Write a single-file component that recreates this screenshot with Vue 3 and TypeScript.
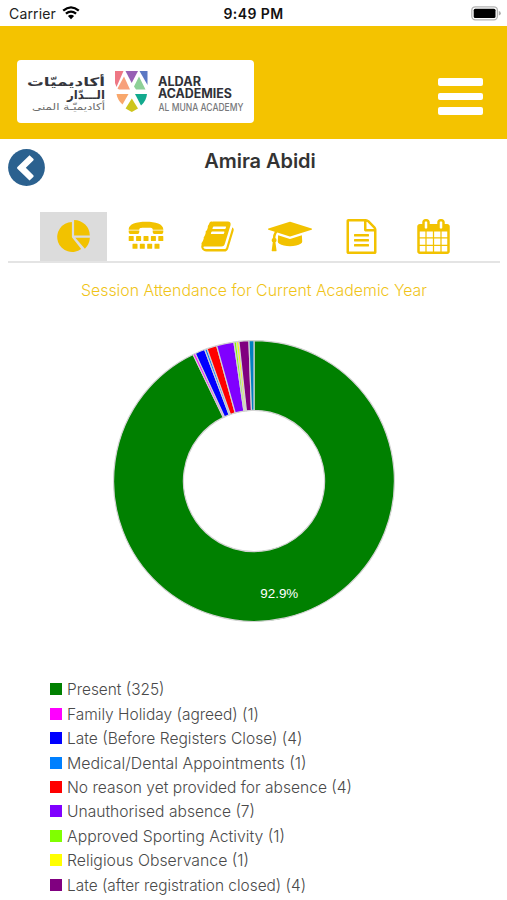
<script setup lang="ts">
interface Entry {
  label: string
  count: number
  color: string
  width: number
}

const entries: Entry[] = [
  { label: 'Present', count: 325, color: '#008000', width: 97.5 },
  { label: 'Family Holiday (agreed)', count: 1, color: '#ff00ff', width: 192 },
  { label: 'Late (Before Registers Close)', count: 4, color: '#0000ff', width: 235.5 },
  { label: 'Medical/Dental Appointments', count: 1, color: '#0080ff', width: 239.5 },
  { label: 'No reason yet provided for absence', count: 4, color: '#ff0000', width: 285 },
  { label: 'Unauthorised absence', count: 7, color: '#8000ff', width: 188 },
  { label: 'Approved Sporting Activity', count: 1, color: '#80ff00', width: 218 },
  { label: 'Religious Observance', count: 1, color: '#ffff00', width: 182 },
  { label: 'Late (after registration closed)', count: 4, color: '#800080', width: 239 },
]

const slices = [...entries.map(({ count, color }) => ({ count, color })), { count: 2, color: '#0080c0' }]
const total = slices.reduce((sum, s) => sum + s.count, 0)
const share = ((entries[0].count / total) * 100).toFixed(1) + '%'

const OUTER = 140.4
const INNER = 70.6

function point(radius: number, turn: number): string {
  const a = turn * Math.PI * 2
  return `${(Math.sin(a) * radius).toFixed(2)} ${(-Math.cos(a) * radius).toFixed(2)}`
}

let start = 0
const arcs = slices.map(({ count, color }) => {
  const from = start / total
  start += count
  const to = start / total
  const large = to - from > 0.5 ? 1 : 0
  return {
    color,
    d: `M${point(OUTER, from)}A${OUTER} ${OUTER} 0 ${large} 1 ${point(OUTER, to)}L${point(INNER, to)}A${INNER} ${INNER} 0 ${large} 0 ${point(INNER, from)}Z`,
  }
})

interface Tab {
  name: string
  box: string
  width: number
  height: number
  d: string
}

const tabs: Tab[] = [
  {
    name: 'Attendance', box: '0 0 35 35', width: 35, height: 35,
    d: 'M15.900 3V18.200L25.200 30A15 15 0 1 1 15.900 3zM18.100 .9A16.200 15.600 0 0 1 33.800 16.400H18.100zM19.300 18.800H33.900Q33.500 25.200 28.900 29.800z',
  },
  {
    name: 'Contact', box: '0 0 36 35', width: 36, height: 35,
    d: 'M.7 10.300C.7 5 8.500 2.700 18 2.700s17.300 2.300 17.300 7.600v.5H24.700V10.300C24.700 8.800 22 8.800 18 8.800s-6.700 0-6.700 1.500v.5H.7zM.7 11.400H11.300V13q0 1.900-1.700 1.900H2.400Q.7 14.900.7 13zM24.700 11.400H35.300V13q0 1.900-1.700 1.900H26.400q-1.700 0-1.700-1.900zM1.200 17h4q.5 0 .5.500v3.900q0 .5-.5.500h-4q-.5 0-.5-.5v-3.900q0-.5.500-.5zM8.600 17h4q.5 0 .5.500v3.900q0 .5-.5.500h-4q-.5 0-.5-.5v-3.900q0-.5.500-.5zM16 17h4q.5 0 .5.500v3.900q0 .5-.5.500h-4q-.5 0-.5-.5v-3.900q0-.5.500-.5zM23.400 17h4q.5 0 .5.500v3.900q0 .5-.5.500h-4q-.5 0-.5-.5v-3.900q0-.5.500-.5zM30.800 17h4q.5 0 .5.500v3.900q0 .5-.5.500h-4q-.5 0-.5-.5v-3.900q0-.5.500-.5zM5 24.700h4q.5 0 .5.500v4q0 .5-.5.500H5q-.5 0-.5-.5v-4q0-.5.500-.5zM12.300 24.700h4q.5 0 .5.500v4q0 .5-.5.500h-4q-.5 0-.5-.5v-4q0-.5.500-.5zM19.700 24.700h4q.5 0 .5.500v4q0 .5-.5.500h-4q-.5 0-.5-.5v-4q0-.5.500-.5zM27 24.700h4q.5 0 .5.500v4q0 .5-.5.500h-4q-.5 0-.5-.5v-4q0-.5.500-.5z',
  },
  {
    name: 'Homework', box: '0 0 1792 1792', width: 35, height: 35,
    d: 'M1703 478q40 57 18 129l-275 906q-19 64-76.500 107.500t-122.500 43.500h-923q-77 0-148.500-53.500t-99.500-131.500q-24-67-2-127 0-4 3-27t4-37q1-8-3-21.500t-3-19.500q2-11 8-21t16.500-23.500 16.500-23.500q23-38 45-91.500t30-91.500q3-10 .5-30t-.5-28q3-11 17-28t17-23q21-36 42-92t25-90q1-9-2.500-32t.5-28q4-13 22-30.500t22-22.500q19-26 42.500-84.500t27.500-96.500q1-8-3-25.500t-2-26.500q2-8 9-18t18-23 17-21q8-12 16.500-30.500t15-35 16-36 19.500-32 26.500-23.500 36-11.500 47.500 5.500l-1 3q38-9 51-9h761q74 0 114 56t18 130l-274 906q-36 119-71.500 153.500t-128.500 34.500h-869q-27 0-38 15-11 16-1 43 24 70 144 70h923q29 0 56-15.500t35-41.500l300-987q7-22 5-57 38 15 59 43zm-1064 2q-4 13 2 22.500t20 9.500h608q13 0 25.500-9.500t16.500-22.500l21-64q4-13-2-22.500t-20-9.500h-608q-13 0-25.500 9.500t-16.500 22.500zm-83 256q-4 13 2 22.500t20 9.500h608q13 0 25.500-9.500t16.500-22.500l21-64q4-13-2-22.500t-20-9.500h-608q-13 0-25.500 9.500t-16.500 22.500z',
  },
  {
    name: 'Assessment', box: '0 0 2304 1792', width: 44, height: 35,
    d: 'M1774 836l18 316q4 69-82 128t-235 93.500-323 34.500-323-34.500-235-93.500-82-128l18-316 574 181q22 7 48 7t48-7zm530-324q0 23-22 31l-1120 352q-4 1-10 1t-10-1l-652-206q-43 34-71 111.500t-34 178.500q63 36 63 109 0 69-58 107l58 433q2 14-8 25-9 11-24 11h-192q-15 0-24-11-10-11-8-25l58-433q-58-38-58-107 0-73 65-111 11-207 98-330l-333-104q-22-8-22-31t22-31l1120-352q4-1 10-1t10 1l1120 352q22 8 22 31z',
  },
  {
    name: 'Reports', box: '0 0 1792 1792', width: 35, height: 35,
    d: 'M1596 380q28 28 48 76t20 88v1152q0 40-28 68t-68 28h-1344q-40 0-68-28t-28-68v-1600q0-40 28-68t68-28h896q40 0 88 20t76 48zm-444-244v376h376q-10-29-22-41l-313-313q-12-12-41-22zm384 1528v-1024h-416q-40 0-68-28t-28-68v-416h-768v1536h1280zm-1024-864q0-14 9-23t23-9h704q14 0 23 9t9 23v64q0 14-9 23t-23 9h-704q-14 0-23-9t-9-23v-64zm736 224q14 0 23 9t9 23v64q0 14-9 23t-23 9h-704q-14 0-23-9t-9-23v-64q0-14 9-23t23-9h704zm0 256q14 0 23 9t9 23v64q0 14-9 23t-23 9h-704q-14 0-23-9t-9-23v-64q0-14 9-23t23-9h704z',
  },
  {
    name: 'Timetable', box: '0 0 1792 1792', width: 35, height: 35,
    d: 'M192 1664h288v-288h-288v288zm352 0h320v-288h-320v288zm-352-352h288v-320h-288v320zm352 0h320v-320h-320v320zm-352-384h288v-288h-288v288zm736 736h320v-288h-320v288zm-384-736h320v-288h-320v288zm768 736h288v-288h-288v288zm-384-352h320v-320h-320v320zm-352-864v-288q0-13-9.500-22.500t-22.500-9.500h-64q-13 0-22.500 9.500t-9.500 22.500v288q0 13 9.500 22.500t22.500 9.500h64q13 0 22.500-9.500t9.500-22.500zm736 864h288v-320h-288v320zm-384-384h320v-288h-320v288zm384 0h288v-288h-288v288zm32-480v-288q0-13-9.500-22.500t-22.500-9.500h-64q-13 0-22.500 9.500t-9.500 22.500v288q0 13 9.500 22.500t22.500 9.500h64q13 0 22.500-9.500t9.500-22.500zm384-64v1280q0 52-38 90t-90 38h-1408q-52 0-90-38t-38-90v-1280q0-52 38-90t90-38h128v-96q0-66 47-113t113-47h64q66 0 113 47t47 113v96h384v-96q0-66 47-113t113-47h64q66 0 113 47t47 113v96h128q52 0 90 38t38 90z',
  },
]
</script>

<template>
  <div class="screen">
    <div class="status">
      <div class="carrier">
        <span>Carrier</span>
        <svg class="wifi" width="18" height="14" viewBox="0 0 18 14">
          <path d="M1.200 4.700Q9-2 16.800 4.700M3.900 7.700q5.100-4.200 10.200 0" fill="none" stroke="#000" stroke-width="2.300" />
          <path d="M5.900 9.900q3.100-2.500 6.200 0L9 13.200z" />
        </svg>
      </div>
      <span class="clock">9:49 PM</span>
      <svg class="battery" width="30" height="15" viewBox="0 0 30 15">
        <rect x=".8" y=".8" width="25.600" height="13" rx="3.500" fill="#fff" stroke="#b4b4b4" stroke-width="1.300" />
        <rect x="2.700" y="2.700" width="21.800" height="9.200" rx="1.500" />
        <path d="M27.800 5q2 .5 2 2.300t-2 2.300z" fill="#aaa" />
      </svg>
    </div>

    <header class="header">
      <svg class="logo" width="237" height="63" viewBox="0 0 237 63">
        <g class="arabic" direction="rtl">
          <text x="88" y="25.500" class="ar-bold" textLength="78" lengthAdjust="spacingAndGlyphs">أكاديميّات</text>
          <text x="88" y="38.500" class="ar-bold" textLength="38" lengthAdjust="spacingAndGlyphs">الـــدّار</text>
          <text x="88" y="50" class="ar-sub" textLength="73" lengthAdjust="spacingAndGlyphs">أكاديميّـة المنى</text>
        </g>
        <path d="M98 11h8.500L99.500 27 98 23z" fill="#ee7784" />
        <path d="M108.500 11h12.500l-6.300 12z" fill="#9760b4" />
        <path d="M122.500 11h8v14z" fill="#5b78c3" />
        <path d="M107 16.500 113 29.500H102l-1.500-1z" fill="#f7a07b" />
        <path d="M122 16.500 128.500 29.500H119l-2-3z" fill="#8ed097" />
        <path d="M99.500 34h12l-6 10.500q-5-4.500-6-10.500z" fill="#f8a76c" />
        <path d="M118 34h12q-.6 7-6 11.500z" fill="#12aa8e" />
        <path d="M114.800 38.500 121 48.500l-6.200 3.500-6.200-3.500z" fill="#cec51d" />
        <text x="141" y="26" class="name" textLength="43" lengthAdjust="spacingAndGlyphs">ALDAR</text>
        <text x="141" y="38" class="name" textLength="74" lengthAdjust="spacingAndGlyphs">ACADEMIES</text>
        <text x="141.500" y="50.500" class="sub" textLength="85" lengthAdjust="spacingAndGlyphs">AL MUNA ACADEMY</text>
      </svg>
      <button class="menu" aria-label="Menu"><i></i><i></i><i></i></button>
    </header>

    <main>
      <div class="title">
        <svg class="back" width="37" height="38" viewBox="0 0 37 38">
          <circle cx="18.500" cy="19.500" r="18.400" fill="#2b618f" />
          <path d="M21.500 7.200 9.400 18.900q-.9.900 0 1.800L21.500 32.400l3.800-3.500q.9-.9 0-1.700l-7.500-7.400 7.500-7.400q.9-.9 0-1.700z" fill="#fff" />
        </svg>
        <h1>Amira Abidi</h1>
      </div>

      <nav class="tabs">
        <a v-for="(tab, i) in tabs" :key="tab.name" class="tab" :class="{ active: i === 0 }" :aria-label="tab.name">
          <svg :width="tab.width" :height="tab.height" :viewBox="tab.box"><path :d="tab.d" /></svg>
        </a>
      </nav>

      <h2><svg width="360" height="24"><text x="0" y="17.500" textLength="346" lengthAdjust="spacingAndGlyphs">Session Attendance for Current Academic Year</text></svg></h2>

      <svg class="chart" width="284" height="284" viewBox="-142 -142 284 284">
        <path v-for="arc in arcs" :key="arc.color" :d="arc.d" :fill="arc.color" stroke="#d3d3d3" stroke-width="1.200" />
        <text x="25.300" y="117.300" text-anchor="middle" textLength="38" lengthAdjust="spacingAndGlyphs">{{ share }}</text>
      </svg>

      <ul class="legend">
        <li v-for="entry in entries" :key="entry.label">
          <i :style="{ background: entry.color }"></i>
          <svg width="320" height="24"><text x="0" y="18" :textLength="entry.width" lengthAdjust="spacingAndGlyphs">{{ entry.label }} ({{ entry.count }})</text></svg>
        </li>
      </ul>
    </main>
  </div>
</template>

<style>
body {
  margin: 0;
  background: #fff;
}
</style>

<style scoped>
.screen {
  width: 507px;
  height: 900px;
  overflow: hidden;
  background: #fff;
  font-family: Inter, "Liberation Sans", sans-serif;
}
svg {
  display: block;
  flex: none;
  overflow: visible;
}
.status {
  box-sizing: border-box;
  height: 25.500px;
  padding: 1px 6px 0 9px;
  display: grid;
  grid-template-columns: 1fr auto 1fr;
  align-items: center;
  font-size: 14px;
  color: #222;
}
.carrier {
  display: flex;
  align-items: center;
  gap: 6px;
  letter-spacing: 0.150px;
}
.clock {
  font-weight: 600;
  font-size: 14px;
  color: #111;
  letter-spacing: 0.400px;
  margin-right: 3px;
}
.battery {
  justify-self: end;
}
.header {
  box-sizing: border-box;
  height: 113px;
  padding: 34px 24.500px 0 17px;
  display: flex;
  justify-content: space-between;
  background: #f4c300;
}
.logo {
  background: #fff;
  border-radius: 4px;
}
.ar-bold {
  font: bold 12px "DejaVu Sans", sans-serif;
  fill: #35363c;
}
.ar-sub {
  font: 9.500px "DejaVu Sans", sans-serif;
  fill: #6b6b6b;
}
.name {
  font: bold 12.500px Inter, sans-serif;
  fill: #303138;
}
.sub {
  font: 500 10px Inter, sans-serif;
  fill: #77787b;
}
.menu {
  width: 44.500px;
  height: 37px;
  margin-top: 18.500px;
  padding: 0;
  border: 0;
  background: none;
  display: flex;
  flex-direction: column;
  justify-content: space-between;
}
.menu i {
  height: 7.600px;
  border-radius: 2px;
  background: #fff;
}
.title {
  display: grid;
  grid-template-columns: 37px 1fr 25px;
  padding: 10.500px 7px 0 8px;
  height: 63px;
}
h1 {
  margin: 0;
  font: 600 20px/24px Inter, "Liberation Sans", sans-serif;
  letter-spacing: -0.050px;
  text-align: center;
  color: #333;
}
.back {
  margin-top: -1px;
}
.tabs {
  display: flex;
  gap: 5px;
  height: 49px;
  margin: 0 7px 0 8px;
  padding-left: 32px;
  border-bottom: 2px solid #e4e4e4;
}
.tab {
  width: 67px;
  display: flex;
  justify-content: center;
  align-items: center;
}
.tab.active {
  background: #dcdcdc;
}
.tab svg {
  fill: #f2c200;
}
h2 {
  margin: 15px 0 0 81px;
  font-size: 16.500px;
  font-weight: 300;
  height: 24px;
}
h2 svg {
  fill: #f0c419;
}
.chart {
  margin: 37px auto 0 112px;
}
.chart text {
  font: 13px "Liberation Sans", sans-serif;
  fill: #fff;
}
.legend {
  list-style: none;
  margin: 54px 0 0 50px;
  padding: 0;
  font-size: 16.500px;
  font-weight: 300;
}
.legend li {
  display: flex;
  align-items: center;
  gap: 5px;
  height: 24.450px;
}
.legend i {
  width: 12px;
  height: 12px;
}
.legend text {
  fill: #4a4a4a;
}
</style>
